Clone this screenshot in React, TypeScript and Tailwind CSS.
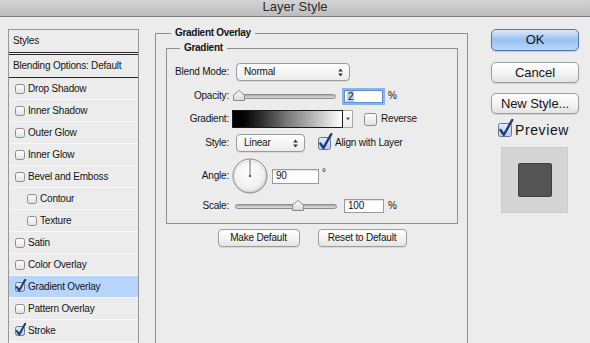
import React from 'react';

const LAYER_STYLES: { label: string; checked?: boolean; sub?: boolean; active?: boolean }[] = [
  { label: 'Drop Shadow' },
  { label: 'Inner Shadow' },
  { label: 'Outer Glow' },
  { label: 'Inner Glow' },
  { label: 'Bevel and Emboss' },
  { label: 'Contour', sub: true },
  { label: 'Texture', sub: true },
  { label: 'Satin' },
  { label: 'Color Overlay' },
  { label: 'Gradient Overlay', checked: true, active: true },
  { label: 'Pattern Overlay' },
  { label: 'Stroke', checked: true },
];

function Checkbox({ size = 10, checked = false }: { size?: number; checked?: boolean }) {
  const s = size;
  return (
    <svg width={s} height={s} viewBox={`0 0 ${s} ${s}`} className="shrink-0 overflow-visible">
      <defs>
        <linearGradient id="cbOff" x1="0" y1="0" x2="0" y2="1">
          <stop offset="0%" stopColor="#ffffff" />
          <stop offset="100%" stopColor="#e2e2e2" />
        </linearGradient>
        <linearGradient id="cbOn" x1="0" y1="0" x2="0" y2="1">
          <stop offset="0%" stopColor="#e6eefa" />
          <stop offset="100%" stopColor="#b6cbe9" />
        </linearGradient>
      </defs>
      <rect
        x="0.5"
        y="0.5"
        width={s - 1}
        height={s - 1}
        rx="2"
        fill={checked ? 'url(#cbOn)' : 'url(#cbOff)'}
        stroke={checked ? '#61779c' : '#8d8d8d'}
      />
      {checked && (
        <path
          d={`M${s * 0.18} ${s * 0.5} L${s * 0.42} ${s * 0.84} L${s * 1.02} ${-s * 0.22}`}
          fill="none"
          stroke="#1d3a72"
          strokeWidth={s > 11 ? 2.4 : 2}
          strokeLinecap="round"
          strokeLinejoin="round"
        />
      )}
    </svg>
  );
}

function UpDown() {
  return (
    <svg width="5" height="9" viewBox="0 0 5 9" className="shrink-0">
      <path d="M2.5 0.5 L4.8 3.6 H0.2 Z" fill="#333" />
      <path d="M2.5 8.5 L4.8 5.4 H0.2 Z" fill="#333" />
    </svg>
  );
}

function Select({ value, width }: { value: string; width: string }) {
  return (
    <div
      className={`${width} h-[18px] flex items-center justify-between pl-[7px] pr-[6px] rounded-[4px] border border-[#9a9a9a] bg-linear-to-b from-[#ffffff] to-[#ececec] shadow-[0_1px_0_rgba(0,0,0,0.08)]`}
    >
      <span>{value}</span>
      <UpDown />
    </div>
  );
}

function Thumb() {
  return (
    <svg width="12" height="11" viewBox="0 0 12 11">
      <defs>
        <linearGradient id="thumbFill" x1="0" y1="0" x2="0" y2="1">
          <stop offset="0%" stopColor="#ffffff" />
          <stop offset="100%" stopColor="#d6d6d6" />
        </linearGradient>
      </defs>
      <path d="M0.5 10.5 V5.2 L6 0.5 L11.5 5.2 V10.5 Z" fill="url(#thumbFill)" stroke="#8a8a8a" />
    </svg>
  );
}

function Slider({ width, thumbLeft }: { width: string; thumbLeft: number }) {
  return (
    <div className={`relative ${width} h-[14px] flex items-center`}>
      <div className="w-full h-[5px] rounded-full border border-[#8c8c8c] bg-linear-to-b from-[#a9a9a9] to-[#e2e2e2]" />
      <div className="absolute top-[1px]" style={{ left: thumbLeft }}>
        <Thumb />
      </div>
    </div>
  );
}

function Dial() {
  return (
    <svg width="36" height="36" viewBox="0 0 36 36" className="shrink-0">
      <defs>
        <radialGradient id="dialFill" cx="0.45" cy="0.4" r="0.65">
          <stop offset="0%" stopColor="#ffffff" />
          <stop offset="70%" stopColor="#f0f0f0" />
          <stop offset="100%" stopColor="#d2d2d2" />
        </radialGradient>
      </defs>
      <circle cx="18" cy="18" r="17" fill="url(#dialFill)" stroke="#878787" />
      <circle cx="18" cy="18.6" r="15.6" fill="none" stroke="rgba(0,0,0,0.08)" />
      <line x1="18" y1="18" x2="18" y2="1.5" stroke="#6e6e6e" strokeWidth="1" />
      <rect x="17" y="17" width="2" height="2" fill="#5a5a5a" />
    </svg>
  );
}

function PushButton({ label, width }: { label: string; width: string }) {
  return (
    <div
      className={`${width} h-[18px] flex items-center justify-center rounded-[4px] border border-[#9e9e9e] bg-linear-to-b from-[#ffffff] via-[#f4f4f4] to-[#e4e4e4] shadow-[0_1px_0_rgba(0,0,0,0.08)]`}
    >
      {label}
    </div>
  );
}

function DialogButton({ label, primary }: { label: string; primary?: boolean }) {
  return (
    <div
      className={
        primary
          ? 'w-[88px] h-[22px] flex items-center justify-center rounded-[5px] border border-[#4d77b0] bg-linear-to-b from-[#dbe9fb] via-[#98c0f0] to-[#b9d8fa] text-[13px] tracking-[-0.2px] shadow-[0_1px_1px_rgba(0,0,0,0.15)]'
          : 'w-[88px] h-[21px] flex items-center justify-center rounded-[5px] border border-[#9c9c9c] bg-linear-to-b from-[#ffffff] via-[#f5f5f5] to-[#e3e3e3] text-[13px] tracking-[-0.1px] shadow-[0_1px_1px_rgba(0,0,0,0.12)]'
      }
    >
      {label}
    </div>
  );
}

function StylesList() {
  return (
    <div className="ml-[8px] mt-[12px] w-[131px] h-[330px] shrink-0 border-l border-r border-t border-[#979797] bg-[#ececec]">
      <div className="h-[22px] pl-[4px] flex items-center">Styles</div>
      <div className="h-[3px] border-t border-b border-[#262626] bg-[#f4f4f4]" />
      <div className="h-[23px] pl-[4px] flex items-center border-b border-[#262626]">Blending Options: Default</div>
      {LAYER_STYLES.map((s) => (
        <div
          key={s.label}
          className={`h-[22px] flex items-center gap-[3px] border-b border-[#f8f8f8] ${s.sub ? 'pl-[18px]' : 'pl-[6px]'} ${
            s.active ? 'bg-[#b5d5fd]' : ''
          }`}
        >
          <Checkbox size={10} checked={s.checked} />
          <span>{s.label}</span>
        </div>
      ))}
    </div>
  );
}

function Label({ text }: { text: string }) {
  return <div className="w-[62px] shrink-0 text-right">{text}</div>;
}

function GradientPanel() {
  return (
    <fieldset className="mt-[10px] ml-[16px] w-[313px] h-[330px] shrink-0 border border-[#8f8f8f] p-0">
      <legend className="ml-[15px] px-[4px] text-[10px] leading-[12px] font-bold tracking-[-0.3px]">
        Gradient Overlay
      </legend>
      <div className="pl-[10px] pr-[9px] pt-[3px]">
        <fieldset className="border border-[#8f8f8f] p-0">
          <legend className="ml-[13px] px-[4px] text-[10px] leading-[12px] font-bold tracking-[-0.3px]">
            Gradient
          </legend>
          <div className="pb-[10px]">
            <div className="mt-[9px] h-[18px] flex items-center">
              <Label text="Blend Mode:" />
              <div className="ml-[7px]">
                <Select value="Normal" width="w-[114px]" />
              </div>
            </div>

            <div className="mt-[8px] h-[14px] flex items-center">
              <Label text="Opacity:" />
              <div className="ml-[4px]">
                <Slider width="w-[103px]" thumbLeft={0} />
              </div>
              <div className="ml-[8px] w-[39px] h-[13px] flex items-center pl-[2px] bg-white border border-[#5b8fd4] shadow-[0_0_0_2px_#8db4ea]">
                <span className="bg-[#b3d2f8] leading-[11px] px-[1px]">2</span>
              </div>
              <span className="ml-[5px]">%</span>
            </div>

            <div className="mt-[7px] h-[18px] flex items-center">
              <Label text="Gradient:" />
              <div className="ml-[3px] flex h-[18px]">
                <div className="w-[111px] h-full border border-[#1a1a1a] bg-linear-to-r from-[#000000] via-[#7a7a7a] to-[#ffffff]" />
                <div className="w-[10px] h-full flex items-center justify-center border border-l-0 border-[#a8a8a8] bg-linear-to-b from-[#ffffff] to-[#ebebeb]">
                  <svg width="4" height="4" viewBox="0 0 4 4">
                    <path d="M0 0.5 H4 L2 3.5 Z" fill="#555" />
                  </svg>
                </div>
              </div>
              <div className="ml-[11px] flex items-center gap-[4px]">
                <Checkbox size={13} />
                <span>Reverse</span>
              </div>
            </div>

            <div className="mt-[6px] h-[18px] flex items-center">
              <Label text="Style:" />
              <div className="ml-[7px]">
                <Select value="Linear" width="w-[69px]" />
              </div>
              <div className="ml-[13px] flex items-center gap-[4px]">
                <Checkbox size={13} checked />
                <span>Align with Layer</span>
              </div>
            </div>

            <div className="mt-[6px] h-[36px] flex items-center">
              <Label text="Angle:" />
              <div className="ml-[3px]">
                <Dial />
              </div>
              <div className="ml-[4px] w-[47px] h-[15px] flex items-center pl-[3px] bg-white border border-[#9a9a9a] shadow-[inset_0_1px_1px_rgba(0,0,0,0.12)]">
                90
              </div>
              <span className="ml-[3px] self-start mt-[9px]">°</span>
            </div>

            <div className="mt-[5px] h-[14px] flex items-center">
              <Label text="Scale:" />
              <div className="ml-[6px]">
                <Slider width="w-[102px]" thumbLeft={57} />
              </div>
              <div className="ml-[7px] w-[40px] h-[14px] flex items-center pl-[3px] bg-white border border-[#9a9a9a] shadow-[inset_0_1px_1px_rgba(0,0,0,0.12)]">
                100
              </div>
              <span className="ml-[4px]">%</span>
            </div>
          </div>
        </fieldset>

        <div className="mt-[5px] flex justify-center gap-[18px]">
          <PushButton label="Make Default" width="w-[82px]" />
          <PushButton label="Reset to Default" width="w-[89px]" />
        </div>
      </div>
    </fieldset>
  );
}

function ActionColumn() {
  return (
    <div className="ml-[23px] mt-[12px] w-[88px] shrink-0 flex flex-col">
      <DialogButton label="OK" primary />
      <div className="mt-[11px]">
        <DialogButton label="Cancel" />
      </div>
      <div className="mt-[10px]">
        <DialogButton label="New Style..." />
      </div>
      <div className="mt-[9px] h-[14px] pl-[7px] flex items-center gap-[3px]">
        <Checkbox size={14} checked />
        <span className="text-[14px] tracking-[0.6px]">Preview</span>
      </div>
      <div className="mt-[10px] ml-[10px] w-[67px] h-[66px] flex items-center justify-center bg-[#d5d5d5] border border-[#cbcbcb]">
        <div className="w-[34px] h-[34px] rounded-[2px] bg-[#545454] border border-[#3f3f3f]" />
      </div>
    </div>
  );
}

export default function App() {
  return (
    <div className="w-[590px] h-[343px] overflow-hidden bg-[#ececec] text-[#141414] text-[10px] leading-[12px] tracking-[-0.2px] font-['Liberation_Sans',Arial,sans-serif]">
      <div className="h-[17px] border-b border-[#7d7d7d] bg-linear-to-b from-[#d4d4d4] to-[#bdbdbd] text-center text-[13px] leading-[13px] tracking-normal text-[#2b2b2b]">
        Layer Style
      </div>
      <div className="flex items-start">
        <StylesList />
        <GradientPanel />
        <ActionColumn />
      </div>
    </div>
  );
}
